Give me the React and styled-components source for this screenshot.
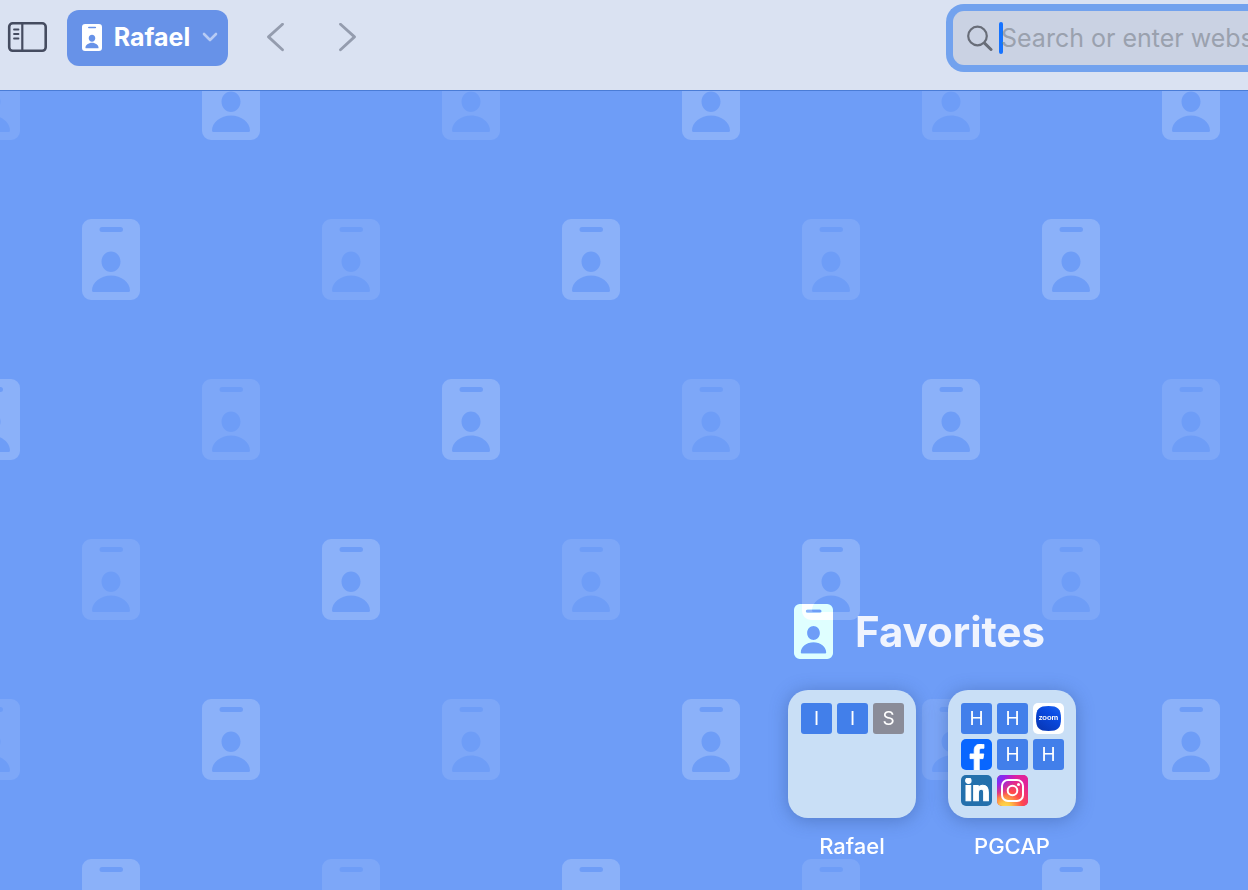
import React from 'react'
import styled, { createGlobalStyle } from 'styled-components'
import { FaFacebookF, FaLinkedinIn } from 'react-icons/fa'

const BADGE =
  'M9 0H49A9 9 0 0 1 58 9V72A9 9 0 0 1 49 81H9A9 9 0 0 1 0 72V9A9 9 0 0 1 9 0Z' +
  'M20 8A2.5 2.5 0 0 0 20 13H38.500A2.5 2.500 0 0 0 38.5 8Z' +
  'M29 32.500C23.500 32.500 19.500 37 19.500 42.800C19.500 48.500 23.700 53 29 53C34.300 53 38.500 48.500 38.500 42.800C38.500 37 34.500 32.500 29 32.500Z' +
  'M29 56.500C18.500 56.500 10 63.500 10 71.500Q10 73 11.500 73H46.500Q48 73 48 71.500C48 63.500 39.500 56.500 29 56.500Z'

// badge positions inside one 480x640 wallpaper tile
const TILE = [
  { x: 202, y: 0, bright: true },
  { x: 442, y: 0 },
  { x: 82, y: 160, bright: true },
  { x: 322, y: 160 },
  { x: 202, y: 320 },
  { x: 442, y: 320, bright: true },
  { x: 82, y: 480 },
  { x: 322, y: 480, bright: true },
]

const FOLDERS = [
  { name: 'Rafael', sites: ['I', 'I', 'S'] },
  { name: 'PGCAP', sites: ['H', 'H', 'zoom', 'facebook', 'H', 'H', 'linkedin', 'instagram'] },
]

function Wallpaper() {
  return (
    <WallpaperSvg aria-hidden="true">
      <defs>
        <pattern id="badges" width="480" height="640" patternUnits="userSpaceOnUse" patternTransform="translate(0 -32)">
          {TILE.map(({ x, y, bright }) => (
            <g key={`${x}-${y}`} fill="#fff" fillRule="evenodd" fillOpacity={bright ? 0.2 : 0.1}>
              <path d={BADGE} transform={`translate(${x} ${y})`} />
              {x > 422 && <path d={BADGE} transform={`translate(${x - 480} ${y})`} />}
            </g>
          ))}
        </pattern>
      </defs>
      <rect width="100%" height="100%" fill="url(#badges)" />
    </WallpaperSvg>
  )
}

function BadgeIcon({ width, height }) {
  return (
    <svg width={width} height={height} viewBox="0 0 58 81" preserveAspectRatio="none" fill="currentColor" aria-hidden="true">
      <path fillRule="evenodd" d={BADGE} />
    </svg>
  )
}

function ZoomLogo() {
  return (
    <svg width="31" height="31" viewBox="0 0 31 31">
      <defs>
        <linearGradient id="zoom" x1="1" y1="0" x2="0.3" y2="1">
          <stop offset="0" stopColor="#1a62f0" />
          <stop offset="0.4" stopColor="#0a4be2" />
          <stop offset="1" stopColor="#0838b8" />
        </linearGradient>
      </defs>
      <path fill="url(#zoom)" d="M15.500 3C25 3 28 6 28 15.500S25 28 15.500 28S3 25 3 15.500S6 3 15.500 3Z" />
      <text x="15.500" y="17" textAnchor="middle" fill="#fff" fontFamily="Lato, sans-serif" fontWeight="700" fontSize="8">zoom</text>
    </svg>
  )
}

function InstagramLogo() {
  return (
    <svg width="31" height="31" viewBox="0 0 31 31">
      <defs>
        <radialGradient id="igWarm" cx="0.27" cy="1.07" r="1">
          <stop offset="0" stopColor="#fd5" />
          <stop offset="0.2" stopColor="#fdc644" />
          <stop offset="0.55" stopColor="#ff4a4a" />
          <stop offset="1" stopColor="#e0229a" />
        </radialGradient>
        <radialGradient id="igCool" cx="-0.1" cy="0" r="0.75">
          <stop offset="0" stopColor="#4a50f8" />
          <stop offset="0.4" stopColor="#8a28f0" />
          <stop offset="1" stopColor="#a010f0" stopOpacity="0" />
        </radialGradient>
      </defs>
      <rect width="31" height="31" fill="url(#igWarm)" />
      <rect width="31" height="31" fill="url(#igCool)" />
      <g fill="none" stroke="#fff" strokeWidth="2">
        <rect x="5" y="5" width="21" height="21" rx="6" />
        <circle cx="15.500" cy="15.500" r="4.800" />
      </g>
      <circle cx="21.500" cy="9.500" r="1.500" fill="#fff" />
    </svg>
  )
}

function Site({ site }) {
  if (site === 'zoom') return <LogoTile $color="#fff"><ZoomLogo /></LogoTile>
  if (site === 'facebook') return <FacebookTile $color="#0866ff"><FaFacebookF size={26} stroke="#fff" strokeWidth={16} /></FacebookTile>
  if (site === 'linkedin') return <LogoTile $color="#2470ac"><FaLinkedinIn size={26} stroke="#fff" strokeWidth={20} /></LogoTile>
  if (site === 'instagram') return <LogoTile $color="#e1306c"><InstagramLogo /></LogoTile>
  return <Tile $color={site === 'S' ? '#8a8c98' : '#427fea'}>{site}</Tile>
}

function App() {
  return (
    <Page>
      <GlobalStyle />
      <Toolbar>
        <Controls>
          <IconButton aria-label="Toggle sidebar">
            <svg width="40" height="32" viewBox="0 0 40 32" fill="none" stroke="#454c60" strokeLinecap="round">
              <rect x="2.200" y="1.300" width="36.500" height="27.500" rx="3.500" strokeWidth="2.600" />
              <path d="M15.300 1.500V28.500" strokeWidth="2.200" />
              <path d="M7 7.500H11.500M7 12H11.500M7 16.500H11.500" strokeWidth="1.800" />
            </svg>
          </IconButton>
          <ProfileButton>
            <BadgeIcon width={20} height={27} />
            <span>Rafael</span>
            <svg width="16" height="10" viewBox="0 0 16 10" fill="none" stroke="#b7cbf4" strokeWidth="2.600" strokeLinecap="round" strokeLinejoin="round" aria-hidden="true">
              <path d="M2 2L8 8L14 2" />
            </svg>
          </ProfileButton>
          <Arrows>
            <IconButton aria-label="Back">
              <svg width="18" height="30" viewBox="0 0 18 30" fill="none" stroke="#949cae" strokeWidth="2.800" strokeLinecap="round" strokeLinejoin="round">
                <path d="M16.500 1.200L2.500 13.900L16.500 26.700" />
              </svg>
            </IconButton>
            <IconButton aria-label="Forward">
              <svg width="18" height="30" viewBox="0 0 18 30" fill="none" stroke="#949cae" strokeWidth="2.800" strokeLinecap="round" strokeLinejoin="round">
                <path d="M2.500 1.200L16.500 13.900L2.500 26.700" />
              </svg>
            </IconButton>
          </Arrows>
        </Controls>
        <SearchField>
          <svg width="26" height="26" viewBox="0 0 26 26" fill="none" stroke="#686d78" strokeLinecap="round" aria-hidden="true">
            <circle cx="10.500" cy="11" r="9.300" strokeWidth="2.200" />
            <path d="M17.500 18.200L24 24.500" strokeWidth="3" />
          </svg>
          <Caret />
          <SearchInput type="text" aria-label="Address" placeholder="Search or enter website name" />
        </SearchField>
      </Toolbar>
      <StartPage>
        <Wallpaper />
        <Favorites>
          <Heading>
            <HeadingIcon>
              <BadgeIcon width={39} height={55} />
            </HeadingIcon>
            <h1>Favorites</h1>
          </Heading>
          <Folders>
            {FOLDERS.map((folder) => (
              <Folder key={folder.name} href="#">
                <FolderGrid>
                  {folder.sites.map((site, i) => (
                    <Site key={i} site={site} />
                  ))}
                </FolderGrid>
                <span>{folder.name}</span>
              </Folder>
            ))}
          </Folders>
        </Favorites>
      </StartPage>
    </Page>
  )
}
export default App

const GlobalStyle = createGlobalStyle`
    * {
        box-sizing: border-box;
    }
    body {
        margin: 0;
        font-family: Inter, "Liberation Sans", sans-serif;
    }
    svg {
        display: block;
        flex-shrink: 0;
    }
`
const Page = styled.div`
    min-height: 100vh;
    display: flex;
    flex-direction: column;
`
const Toolbar = styled.header`
    display: flex;
    justify-content: space-between;
    align-items: flex-start;
    height: 91px;
    background: #dae2f2;
    border-bottom: 1px solid #4a7cd6;
`
const Controls = styled.div`
    display: flex;
    align-items: center;
    gap: 20px;
    padding: 10px 0 0 7px;
`
const IconButton = styled.button`
    display: flex;
    padding: 0;
    border: 0;
    background: none;
    cursor: pointer;
`
const ProfileButton = styled.button`
    display: flex;
    align-items: center;
    justify-content: space-between;
    width: 161px;
    height: 56px;
    padding: 0 10px 2px 15px;
    border: 0;
    border-radius: 12px;
    background: #6792e8;
    color: white;
    font-family: inherit;
    font-size: 25px;
    font-weight: 700;
    line-height: 32px;
    cursor: pointer;
`
const Arrows = styled.nav`
    display: flex;
    gap: 54px;
    padding-left: 18px;
`
const SearchField = styled.div`
    display: flex;
    align-items: center;
    width: 302px;
    height: 68px;
    margin-top: 4px;
    padding-left: 14px;
    border: 7px solid #72a2ee;
    border-right: 0;
    border-radius: 18px 0 0 18px;
    background: #cad2e3;
`
const Caret = styled.span`
    flex-shrink: 0;
    width: 4px;
    height: 32px;
    margin: 0 -2px 0 6px;
    border-radius: 2px;
    background: #1673ff;
`
const SearchInput = styled.input`
    flex: 1;
    min-width: 0;
    height: 40px;
    padding: 0;
    border: 0;
    outline: none;
    background: transparent;
    font-family: inherit;
    font-size: 25px;

    &::placeholder {
        color: #9aa1ae;
        opacity: 1;
    }
`
const StartPage = styled.main`
    position: relative;
    flex: 1;
    display: flex;
    justify-content: flex-end;
    padding-top: 513px;
    overflow: hidden;
    isolation: isolate;
    background: #6e9df7;
`
const WallpaperSvg = styled.svg`
    position: absolute;
    inset: 0;
    z-index: -1;
    width: 100%;
    height: 100%;
`
const Favorites = styled.section`
    width: 460px;
`
const Heading = styled.div`
    display: flex;
    align-items: center;
    gap: 22px;
    padding-left: 6px;
    height: 55px;

    h1 {
        margin: 0;
        color: #f0f4fe;
        font-size: 42px;
        font-weight: 700;
        line-height: 56px;
    }
`
const HeadingIcon = styled.span`
    color: #717171;
    mix-blend-mode: plus-lighter;
`
const Folders = styled.div`
    display: flex;
    gap: 32px;
    margin-top: 31px;
`
const Folder = styled.a`
    display: flex;
    flex-direction: column;
    align-items: center;
    gap: 14px;
    color: white;
    font-size: 22px;
    font-weight: 500;
    line-height: 28px;
    text-decoration: none;
`
const FolderGrid = styled.div`
    display: grid;
    grid-template-columns: repeat(3, 31px);
    grid-auto-rows: 31px;
    gap: 5px;
    width: 128px;
    height: 128px;
    padding: 13px;
    border-radius: 20px;
    background: #c9dff6;
    box-shadow: 0 2px 18px rgba(40, 70, 130, 0.4);
`
const Tile = styled.div`
    display: flex;
    align-items: center;
    justify-content: center;
    overflow: hidden;
    border-radius: 3px;
    background: ${props => props.$color};
    color: white;
    font-size: 19px;
    font-weight: 400;
    line-height: 31px;
`
const LogoTile = styled(Tile)`
    border-radius: 5px;
`
const FacebookTile = styled(LogoTile)`
    align-items: flex-end;
`
